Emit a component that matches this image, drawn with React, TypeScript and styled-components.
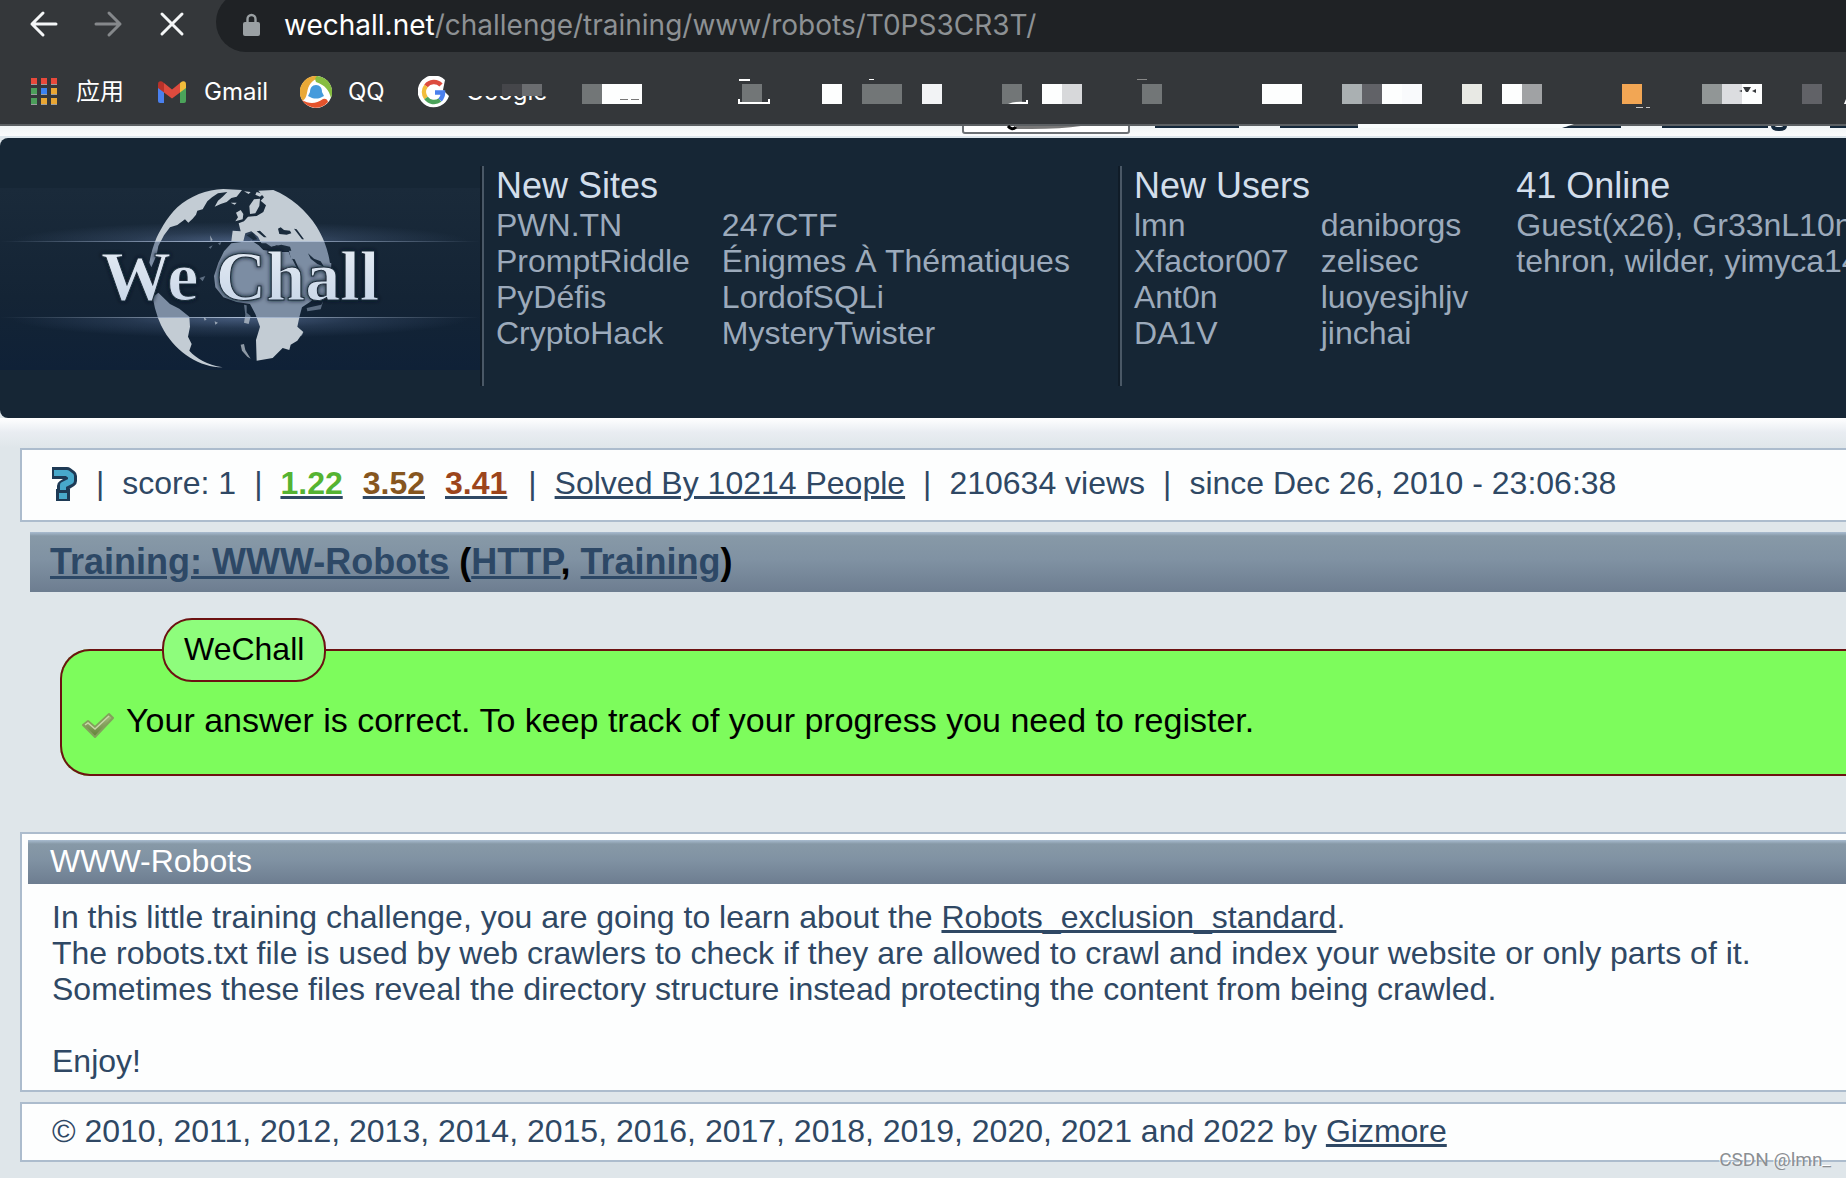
import React from "react";
import styled, { createGlobalStyle } from "styled-components";

const GlobalStyle = createGlobalStyle`
  *, *::before, *::after { box-sizing: border-box; }
  body {
    margin: 0;
    background: #dfe6ea;
    overflow-x: hidden;
    font-family: "Liberation Sans", Arial, sans-serif;
    font-size: 32px;
    line-height: 36px;
    color: #2f4864;
  }
  ul, h1, h2, p { margin: 0; padding: 0; font-weight: 400; }
  ul { list-style: none; }
  a { color: inherit; }
`;

const Page = styled.div`
  position: relative;
  min-height: 100vh;
  overflow: hidden;
`;

/* ---------- browser chrome ---------- */

const Chrome = styled.header`
  background: #34373a;
  border-bottom: 2px solid #5c6063;
  font-family: Inter, "Noto Sans CJK SC", sans-serif;
`;

const Toolbar = styled.div`
  display: flex;
  align-items: flex-start;
  height: 52px;
  overflow: hidden;
`;

const NavButtons = styled.div`
  display: flex;
  gap: 32px;
  width: 216px;
  padding: 8px 0 0 28px;
`;

const NavButton = styled.button`
  width: 32px;
  height: 32px;
  padding: 0;
  border: 0;
  background: none;
  color: #f4f6f7;
  &:disabled { color: #85888b; }
  svg { display: block; }
`;

const AddressBar = styled.div`
  flex: 1;
  display: flex;
  align-items: center;
  gap: 24px;
  height: 60px;
  margin-top: -8px;
  padding: 6px 0 0 27px;
  background: #1f2225;
  border-radius: 30px 0 0 30px;
`;

const Url = styled.a`
  font-size: 28px;
  line-height: 32px;
  color: #8d9194;
  text-decoration: none;
  white-space: nowrap;
  b { font-weight: 400; color: #fff; }
`;

const Bookmarks = styled.nav`
  display: flex;
  align-items: flex-start;
  height: 72px;
  padding: 24px 0 0 28px;
  overflow: hidden;
`;

const Bookmark = styled.a<{ $width: number }>`
  flex: none;
  display: flex;
  align-items: center;
  gap: 16px;
  width: ${(p) => p.$width}px;
  height: 32px;
  color: #fff;
  font-size: 24px;
  line-height: 32px;
  text-decoration: none;
  svg { flex: none; display: block; }
`;

const HiddenName = styled.span`
  position: relative;
  &::before {
    content: "";
    position: absolute;
    left: 0;
    top: 0;
    width: 86px;
    height: 20px;
    background: linear-gradient(90deg, #34373a 36px, #45464a 36px 56px, #6b6d70 56px 76px, #34373a 76px);
  }
  &::after {
    content: "";
    position: absolute;
    left: 0;
    top: 0;
    width: 86px;
    height: 8px;
    background: #34373a;
  }
`;

const Mosaic = styled.div`
  display: flex;
  padding-top: 8px;
`;

const Tile = styled.span<{ $color: string; $cells: number; $skip: number }>`
  flex: none;
  width: ${(p) => p.$cells * 20}px;
  height: 20px;
  margin-left: ${(p) => p.$skip * 20}px;
  background: ${(p) => p.$color};
  svg { display: block; overflow: visible; }
`;

/* ---------- strip of page above the banner ---------- */

const TopStrip = styled.div`
  display: flex;
  align-items: flex-start;
  height: 12px;
  padding-left: 962px;
  background: linear-gradient(#f0f4f5, #fbfcfd 10px, #dde6ec 10px);
  svg { flex: none; display: block; overflow: visible; }
`;

/* ---------- banner ---------- */

const Banner = styled.header`
  display: flex;
  height: 280px;
  overflow: hidden;
  background: #162635;
  border-radius: 8px 0 0 8px;
`;

const Logo = styled.a`
  flex: none;
  padding-top: 50px;
  svg { display: block; }
`;

const InfoColumn = styled.section<{ $rule?: boolean }>`
  flex: none;
  height: 220px;
  margin-top: 28px;
  padding: 0 48px 0 ${(p) => (p.$rule ? 14 : 0)}px;
  border-left: ${(p) => (p.$rule ? "2px solid #101c28" : "0")};
  box-shadow: ${(p) => (p.$rule ? "inset 2px 0 #4a5866" : "none")};
  white-space: nowrap;
`;

const InfoTitle = styled.h2`
  padding-bottom: 2px;
  font-size: 36px;
  line-height: 39px;
  color: #d3deeb;
`;

const InfoGrid = styled.ul`
  display: grid;
  grid-template-columns: auto auto;
  justify-content: start;
  column-gap: 32px;
  color: #9caabb;
  a { text-decoration: none; }
`;

const Online = styled.p`
  color: #9caabb;
`;

/* ---------- content ---------- */

const Content = styled.main`
  padding: 30px 0 16px 20px;
  background: linear-gradient(#fff, #e9edf2 14px, #dfe6ea 30px);
`;

const Box = styled.section`
  background: #fdfefe;
  border: 2px solid #acbccd;
  border-right: 0;
`;

const Stats = styled(Box)`
  display: flex;
  align-items: center;
  gap: 18px;
  padding: 15px 0 19px 29px;
  white-space: nowrap;
  svg { flex: none; display: block; }
`;

const Votes = styled.span`
  display: flex;
  gap: 20px;
  padding-right: 3px;
`;

const Vote = styled.a<{ $color: string }>`
  font-weight: 700;
  text-decoration-color: #2f4864;
  span { color: ${(p) => p.$color}; }
`;

const barFill = "linear-gradient(#a9bcd0, #8799a7 4px, #8092a3 45%, #6d7d90)";

const Title = styled.h1`
  margin: 10px 0 0 10px;
  padding: 9px 0 10px 20px;
  background: ${barFill};
  color: #000;
  font-size: 36px;
  font-weight: 700;
  line-height: 41px;
  a { color: #2d4866; }
`;

const Message = styled.fieldset`
  margin: 26px 0 56px 40px;
  padding: 19px 0 34px 20px;
  border: 2px solid #6c1212;
  border-right: 0;
  border-radius: 30px 0 0 30px;
  background: #7dfc5c;
  color: #000;
`;

const MessageTitle = styled.legend`
  margin-left: 80px;
  padding: 11px 20px 13px;
  border: 2px solid #6c1212;
  border-radius: 30px;
  background: #8efd7c;
`;

const MessageText = styled.p`
  display: flex;
  align-items: flex-end;
  gap: 10px;
  font-size: 34px;
  line-height: 39px;
`;

const Article = styled(Box)`
  padding: 6px 0 11px 6px;
`;

const ArticleTitle = styled.h2`
  padding: 3px 0 5px 22px;
  background: ${barFill};
  color: #fff;
  font-size: 32px;
`;

const ArticleBody = styled.p`
  padding: 15px 0 0 24px;
`;

const Footer = styled(Box).attrs({ as: "footer" })`
  margin-top: 10px;
  padding: 9px 0 11px 30px;
`;

const Watermark = styled.span`
  position: absolute;
  right: 15px;
  bottom: 6px;
  font-family: Roboto, sans-serif;
  font-size: 19px;
  line-height: 24px;
  color: #8b8f93;
  text-shadow: -1px -1px #fff;
`;

/* ---------- data ---------- */

const tiles: [string, number, number][] = [
  ["#727677", 1, 0], ["#fdfefe", 2, 0], ["#727677", 1, 5], ["#fdfefe", 1, 3], ["#727677", 2, 1],
  ["#f2f3f5", 1, 1], ["#727677", 1, 3], ["#fdfefe", 1, 1], ["#d7d8da", 1, 0], ["#727677", 1, 3],
  ["#fdfefe", 2, 5], ["#aab0b2", 1, 2], ["#616267", 1, 0], ["#fdfefe", 1, 0], ["#f9fafc", 1, 0],
  ["#e8e9e4", 1, 2], ["#fdfefe", 1, 1], ["#a0a2a4", 1, 0], ["#f2a654", 1, 4], ["#919696", 1, 3],
  ["#dcdde0", 1, 0], ["#fdfefe", 1, 0], ["#616267", 1, 2],
];

const tileMarks: Record<number, React.ReactNode> = {
  1: <path d="M18 15.5H40" stroke="#777" strokeDasharray="8 3" />,
  2: <><path d="M-3 -4h11" stroke="#fff" strokeWidth="2" /><path d="M-3 15v4H27v-4" fill="none" stroke="#fff" strokeWidth="2" /></>,
  4: <path d="M7 -4.5h5" stroke="#fff" />,
  6: <path d="M6 20q6-3 18-2v-2h2v4z" fill="#fff" />,
  9: <path d="M-5 -4.5h10" stroke="#888" />,
  18: <path d="M14 23.5h7m3 0h4" stroke="#c8c8c8" />,
  21: <path d="M-3 7l3-1v2zM1 3h8l-3 5H4zM10 7l4-2v4z" fill="#34373a" />,
  22: <path d="M42 20l6-15v15z" fill="#fff" />,
};

const sites = ["PWN.TN", "247CTF", "PromptRiddle", "Énigmes À Thématiques", "PyDéfis", "LordofSQLi", "CryptoHack", "MysteryTwister"];
const users = ["lmn", "daniborgs", "Xfactor007", "zelisec", "Ant0n", "luoyesjhljv", "DA1V", "jinchai"];
const votes = [["1.22", "#55b332"], ["3.52", "#86561f"], ["3.41", "#9c451c"]];

/* ---------- drawings ---------- */

const Stroke = ({ d }: { d: string }) => (
  <svg width="32" height="32" viewBox="0 0 32 32" fill="none" stroke="currentColor" strokeWidth="3" strokeLinecap="round" strokeLinejoin="round">
    <path d={d} />
  </svg>
);

const LockIcon = () => (
  <svg width="17" height="24" viewBox="0 0 17 24">
    <path d="M4.5 10V6a4 4 0 0 1 8 0v4" fill="none" stroke="#9aa0a3" strokeWidth="2.4" />
    <rect y="9" width="17" height="14" rx="2" fill="#9aa0a3" />
  </svg>
);

const AppsIcon = () => {
  const colors = ["#e8493b", "#e8493b", "#e8493b", "#4c9f5b", "#3b82f0", "#e9a633", "#4c9f5b", "#e9a633", "#e9a633"];
  return (
    <svg width="32" height="32" viewBox="0 0 32 32">
      {colors.map((c, i) => (
        <g key={i} transform={`translate(${3 + (i % 3) * 10} ${2 + Math.floor(i / 3) * 10})`}>
          <rect width="6" height="7" fill="#9a9da0" />
          <rect width="6" height="6" fill={c} />
        </g>
      ))}
    </svg>
  );
};

const GmailIcon = () => (
  <svg width="32" height="32" viewBox="0 0 32 32">
    <path d="M2 9v16q0 2 2 2h4V13z" fill="#4a80ee" />
    <path d="M30 9v16q0 2-2 2h-4V13z" fill="#4ba35a" />
    <path d="M24 7l2-1.500q4-1 4 3v3.500l-6 4.500z" fill="#f2bd3b" />
    <path d="M8 7L6 5.500Q2 4.500 2 8.500V12l6 4.500z" fill="#b8322a" />
    <path d="M8 7l8 6.500L24 7v9.500l-8 6-8-6z" fill="#dd4b3e" />
  </svg>
);

const QqIcon = () => (
  <svg width="32" height="32" viewBox="0 0 32 32">
    <circle cx="16" cy="16" r="16" fill="#fff" />
    <path d="M17 0A16 16 0 0 0 2 24C4 25 6 22 7 17C8 9 12 4 19 2z" fill="#eaa937" />
    <path d="M17 0A16 16 0 0 1 31 22C29 14 25 9 16 6Q14 2 17 0z" fill="#86bd40" />
    <path d="M2 24A16 16 0 0 0 28 26Q27 22 23 23C16 28 9 28 2 24z" fill="#e4532c" />
    <path d="M16 9c4 0 6 3 6 7l2 4-2 1-2 1q-4 1-8 0l-2-1-2-1 2-4c0-4 2-7 6-7z" fill="#459bdc" />
  </svg>
);

const GoogleIcon = () => (
  <svg width="32" height="32" viewBox="0 0 32 32">
    <path d="M27 4A16 16 0 1 0 31 20L25 14z" fill="#fff" />
    <g fill="none" strokeWidth="4.500">
      <path d="M8 10A10 10 0 0 1 23 9" stroke="#dc4b3e" />
      <path d="M8 22A10 10 0 0 1 8 10" stroke="#f2bd3b" />
      <path d="M22 24A10 10 0 0 1 8 22" stroke="#4ba35a" />
      <path d="M17 16.500h8Q25 21 22 24" stroke="#4a80ee" />
    </g>
  </svg>
);

const ClippedNav = () => (
  <svg width="884" height="12" viewBox="962 126 884 12">
    <path d="M963 126v5q0 2 2 2h162q2 0 2-2v-5" fill="#fff" stroke="#6c7074" strokeWidth="2" />
    <path d="M1016 126h65q-19 3-50 3h-15z" fill="#777" />
    <path d="M1008 126q4 5 8 1" fill="none" stroke="#000" strokeWidth="3" />
    <path d="M1155 126h84v2h-84zM1280 126h78v2h-78zM1662 126h106v2h-106zM1830 126h16v2h-16zM1568 126h53v2h-63z" fill="#14283b" />
    <path d="M1773 126q0 3 6 3t6-3" fill="none" stroke="#14283b" strokeWidth="4" />
    <path d="M1358 124h216l-12 4H1358z" fill="#f8fbfc" />
  </svg>
);

const Land = ({ fill }: { fill: string }) => (
  <g transform="translate(90 180) scale(.33333)" fill={fill}>
    <path d="M195 185C205 160 230 112 262 82C300 48 350 28 400 27L456 30L440 50L424 54L410 66L392 72L374 80L384 62L398 50L412 36L384 40L366 52L352 64L345 76L338 88L322 92L318 104L308 116L295 128L285 118L262 135L240 142L222 166L205 198L200 225L184 262L178 248Q184 214 195 185z" />
    <path d="M505 32L550 30C600 50 650 92 680 140C708 185 724 240 722 290Q722 318 714 338L704 348L690 344L672 304L655 292L646 262L624 236L602 214L560 196L530 206L514 190L504 170L484 154L466 160L460 184L424 184L428 152L452 154L446 130L462 124L474 110L500 108L520 96L528 76L512 62L522 52z" />
    <path d="M478 78L492 58L510 56L508 78L496 100L480 102zM438 98l14-8 8 12-2 16-22 6 8-12zM462 34l20 2-6 6zM500 36l20 6-10 8-14-6zM422 68l18 0-6 6z" />
    <path d="M424 190L485 182L506 196L520 210L560 216L596 216L614 262L640 300L668 318L690 340L660 366L636 382L628 412L622 440L640 456L622 482L602 494L598 510L578 504L548 534L500 542L498 480L510 440L496 402L480 372L440 366L400 352L376 322L372 288L385 248L402 214z" />
    <path d="M596 210L724 250L722 290Q722 318 714 338L690 344L640 306L610 262z" />
    <path d="M188 352L205 338L240 372L268 386L298 410L300 440L294 470L305 492L298 512C320 536 350 554 398 562C330 562 262 520 222 452Q198 412 188 352z" />
    <path d="M452 494l10-2 4 18 16 26-10-6-16-18zM462 374l8 2 0 22 12 10-6 24-14-4 4-24zM650 384l44-10 6-12-8 26-40 6zM640 456l-4 10-8 4zM360 166l8 14-6 4zM384 190l10-4-4 10zM328 294l18-6-8 16zM368 196l-6 10-6-4zM340 410l10 8-6 4zM374 424l10 4-8 6z" opacity=".7" />
  </g>
);

const LogoArt = () => (
  <svg width="480" height="182" viewBox="0 188 480 182" role="img" aria-label="We Chall">
    <defs>
      <linearGradient id="back" x1="0" y1="0" x2="0" y2="1">
        <stop offset="0" stopColor="#1a2a3a" /><stop offset=".6" stopColor="#142435" /><stop offset="1" stopColor="#0f2137" />
      </linearGradient>
      <linearGradient id="line">
        <stop offset="0" stopColor="#a9bad3" stopOpacity="0" /><stop offset=".5" stopColor="#a9bad3" /><stop offset="1" stopColor="#a9bad3" stopOpacity="0" />
      </linearGradient>
      <radialGradient id="glow">
        <stop offset="0" stopColor="#6f88b5" stopOpacity=".55" /><stop offset=".5" stopColor="#6f88b5" stopOpacity=".2" /><stop offset="1" stopColor="#6f88b5" stopOpacity="0" />
      </radialGradient>
      <linearGradient id="letters" x1="0" y1="0" x2="0" y2="1">
        <stop offset="0" stopColor="#e9eef5" /><stop offset="1" stopColor="#c3d3e6" />
      </linearGradient>
      <clipPath id="top"><rect y="188" width="480" height="54" /></clipPath>
      <clipPath id="band"><rect y="242" width="480" height="76" /></clipPath>
      <clipPath id="low"><rect y="318" width="480" height="52" /></clipPath>
      <filter id="shade" x="-10%" y="-20%" width="120%" height="140%"><feDropShadow dx="0" dy="0" stdDeviation="2" floodColor="#0b1722" /></filter>
    </defs>
    <rect y="188" width="480" height="182" fill="url(#back)" />
    <g clipPath="url(#top)"><ellipse cx="240" cy="242" rx="230" ry="20" fill="url(#glow)" /><Land fill="#c3ccd4" /></g>
    <g clipPath="url(#low)"><ellipse cx="240" cy="318" rx="230" ry="20" fill="url(#glow)" /><Land fill="#c3ccd4" /></g>
    <g clipPath="url(#band)"><Land fill="#7c8da3" /></g>
    <g transform="translate(90 180) scale(.33333)" fill="#1a2b3c">
      <path d="M508 190l20 0 16 10 30-6 26 6 4 12-30 2-40-6-20-4zM564 146l8-4 10 8 18 2 4 8-14 4-22-2zM612 146l8 2 22 30-6 0zM500 154l10-2 20 20-8 0zM654 220l18 16 20 8 10 16-20-8-20-16zM606 236l8 2 18 40-6-4zM470 166l18-8 14 20-12 2z" />
    </g>
    <rect y="241" width="480" height="1" fill="url(#line)" />
    <rect y="317" width="480" height="1" fill="url(#line)" />
    <text x="101" y="300" fontFamily="Liberation Serif, serif" fontWeight="700" fontSize="70" fill="url(#letters)" stroke="#1a2938" strokeWidth="1" filter="url(#shade)">We Chall</text>
  </svg>
);

const HelpIcon = () => (
  <svg width="27" height="36" viewBox="0 0 27 36">
    <g fill="none" stroke="#1e3a55">
      <path d="M1 8h15l4 3v5l-8 5v5" strokeWidth="12" strokeLinejoin="round" />
      <path d="M12 24v12" strokeWidth="14" />
    </g>
    <g fill="none" stroke="#48a9cb" strokeWidth="6">
      <path d="M3 8h13l4 3v5l-8 4v5" strokeLinejoin="round" />
      <path d="M12 28v6" strokeWidth="8" />
    </g>
  </svg>
);

const CheckIcon = () => (
  <svg width="34" height="28" viewBox="0 0 34 28">
    <defs>
      <linearGradient id="check" x1="0" y1="0" x2="0" y2="1">
        <stop offset="0" stopColor="#a9bd83" /><stop offset="1" stopColor="#5f7f35" />
      </linearGradient>
    </defs>
    <path d="M1 13l5-4 7 6L27 2l4 4-18 19z" fill="url(#check)" stroke="#83a05c" strokeWidth="2" strokeLinejoin="round" />
    <path d="M3 13l3-2 7 6L27 4" fill="none" stroke="#c7d6a8" strokeWidth="1.500" />
  </svg>
);

/* ---------- page ---------- */

const LinkGrid = ({ names }: { names: string[] }) => (
  <InfoGrid>
    {names.map((name) => (
      <li key={name}><a href="#">{name}</a></li>
    ))}
  </InfoGrid>
);

export default function App() {
  return (
    <Page>
      <GlobalStyle />
      <Chrome>
        <Toolbar>
          <NavButtons>
            <NavButton aria-label="Back"><Stroke d="M28 16H4M15 5L4 16l11 11" /></NavButton>
            <NavButton aria-label="Forward" disabled><Stroke d="M4 16h24M17 5l11 11-11 11" /></NavButton>
            <NavButton aria-label="Stop"><Stroke d="M6 6l20 20M26 6L6 26" /></NavButton>
          </NavButtons>
          <AddressBar>
            <LockIcon />
            <Url href="#"><b>wechall.net</b>/challenge/training/www/robots/T0PS3CR3T/</Url>
          </AddressBar>
        </Toolbar>
        <Bookmarks>
          <Bookmark href="#" $width={128}><AppsIcon />应用</Bookmark>
          <Bookmark href="#" $width={144}><GmailIcon />Gmail</Bookmark>
          <Bookmark href="#" $width={118}><QqIcon />QQ</Bookmark>
          <Bookmark href="#" $width={164}><GoogleIcon /><HiddenName>Google</HiddenName></Bookmark>
          <Mosaic>
            {tiles.map(([color, cells, skip], i) => (
              <Tile key={i} $color={color} $cells={cells} $skip={skip}>
                {tileMarks[i] && <svg width="20" height="20">{tileMarks[i]}</svg>}
              </Tile>
            ))}
          </Mosaic>
        </Bookmarks>
      </Chrome>

      <TopStrip><ClippedNav /></TopStrip>

      <Banner>
        <Logo href="#"><LogoArt /></Logo>
        <InfoColumn $rule>
          <InfoTitle>New Sites</InfoTitle>
          <LinkGrid names={sites} />
        </InfoColumn>
        <InfoColumn $rule>
          <InfoTitle>New Users</InfoTitle>
          <LinkGrid names={users} />
        </InfoColumn>
        <InfoColumn>
          <InfoTitle>41 Online</InfoTitle>
          <Online>Guest(x26), Gr33nL10n<br />tehron, wilder, yimyca14</Online>
        </InfoColumn>
      </Banner>

      <Content>
        <Stats>
          <HelpIcon />
          <span>|</span>
          <span>score: 1</span>
          <span>|</span>
          <Votes>
            {votes.map(([value, color]) => (
              <Vote key={value} href="#" $color={color}><span>{value}</span></Vote>
            ))}
          </Votes>
          <span>|</span>
          <a href="#">Solved By 10214 People</a>
          <span>|</span>
          <span>210634 views</span>
          <span>|</span>
          <span>since Dec 26, 2010 - 23:06:38</span>
        </Stats>

        <Title>
          <a href="#">Training: WWW-Robots</a> (<a href="#">HTTP</a>, <a href="#">Training</a>)
        </Title>

        <Message>
          <MessageTitle>WeChall</MessageTitle>
          <MessageText>
            <CheckIcon />
            Your answer is correct. To keep track of your progress you need to register.
          </MessageText>
        </Message>

        <Article>
          <ArticleTitle>WWW-Robots</ArticleTitle>
          <ArticleBody>
            In this little training challenge, you are going to learn about the <a href="#">Robots_exclusion_standard</a>.
            <br />
            The robots.txt file is used by web crawlers to check if they are allowed to crawl and index your website or only parts of it.
            <br />
            Sometimes these files reveal the directory structure instead protecting the content from being crawled.
            <br />
            <br />
            Enjoy!
          </ArticleBody>
        </Article>

        <Footer>
          © 2010, 2011, 2012, 2013, 2014, 2015, 2016, 2017, 2018, 2019, 2020, 2021 and 2022 by <a href="#">Gizmore</a>
        </Footer>
      </Content>
      <Watermark>CSDN @lmn_</Watermark>
    </Page>
  );
}
